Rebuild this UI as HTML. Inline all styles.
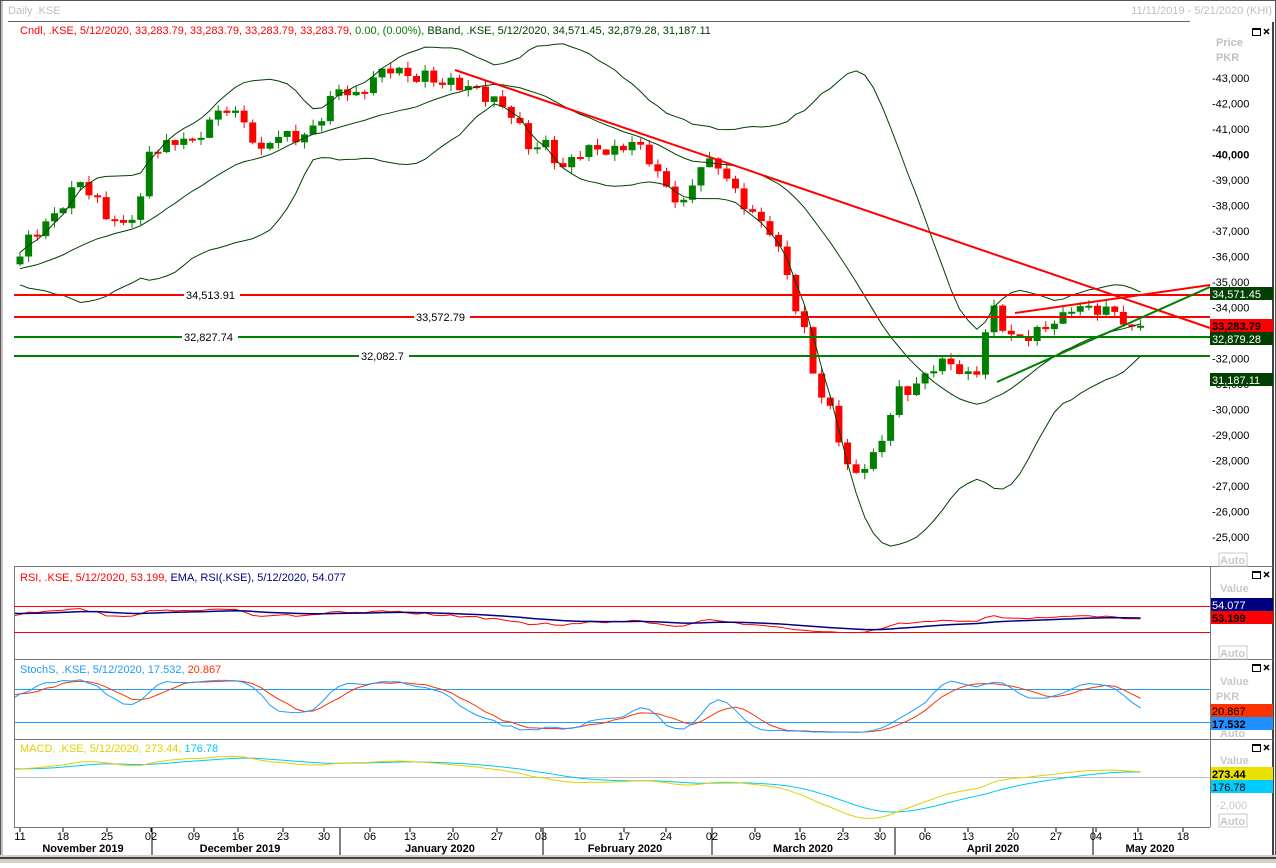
<!DOCTYPE html><html><head><meta charset="utf-8"><style>
body{margin:0;width:1276px;height:863px;overflow:hidden;background:#fff;font-family:"Liberation Sans",Tahoma,sans-serif}
svg text{font-family:"Liberation Sans",Tahoma,sans-serif;font-size:11px}
</style></head><body>
<svg id="s" width="1276" height="863" xmlns="http://www.w3.org/2000/svg">
<rect x="0" y="0" width="1276" height="863" fill="#fff"/>
<rect x="0.5" y="0.5" width="1275" height="862" fill="none" stroke="#555"/>
<line x1="2" y1="1" x2="2" y2="862" stroke="#888"/>
<line x1="8" y1="21.5" x2="1190" y2="21.5" stroke="#666"/>
<line x1="1273" y1="22" x2="1273" y2="855" stroke="#444" stroke-width="2"/>
<rect x="0" y="855" width="1276" height="8" fill="#d4d0c8"/>
<line x1="0" y1="858" x2="1276" y2="858" stroke="#444" stroke-width="2"/>
<text x="8" y="14" fill="#c0c0c0" font-size="12">Daily .KSE</text>
<text x="1272" y="14" fill="#c0c0c0" text-anchor="end">11/11/2019 - 5/21/2020 (KHI)</text>
<text x="20" y="34" fill="#ff0000">Cndl, .KSE, 5/12/2020, 33,283.79, 33,283.79, 33,283.79, 33,283.79, <tspan fill="#008000">0.00, (0.00%),</tspan> <tspan fill="#004000">BBand, .KSE, 5/12/2020, 34,571.45, 32,879.28, 31,187.11</tspan></text>
<line x1="14.5" y1="566" x2="14.5" y2="827" stroke="#777"/>
<line x1="1210.5" y1="566" x2="1210.5" y2="827" stroke="#777"/>
<line x1="14" y1="566.5" x2="1210" y2="566.5" stroke="#777"/>
<line x1="14" y1="659.5" x2="1273" y2="659.5" stroke="#777"/>
<line x1="14" y1="739.5" x2="1273" y2="739.5" stroke="#777"/>
<line x1="14" y1="827.5" x2="1210" y2="827.5" stroke="#777"/>
<line x1="1210" y1="566.5" x2="1273" y2="566.5" stroke="#777"/>
<g id="axis"></g>
<g id="chart"></g>
<line x1="14" y1="295" x2="1210" y2="295" stroke="#ff0000" stroke-width="2"/>
<line x1="14" y1="317" x2="1210" y2="317" stroke="#ff0000" stroke-width="2"/>
<line x1="14" y1="337" x2="1210" y2="337" stroke="#008000" stroke-width="2"/>
<line x1="14" y1="356" x2="1210" y2="356" stroke="#008000" stroke-width="2"/>
<rect x="184" y="289" width="56" height="12" fill="#fff"/><text x="186" y="299" fill="#000">34,513.91</text>
<rect x="414" y="311" width="56" height="12" fill="#fff"/><text x="416" y="321" fill="#000">33,572.79</text>
<rect x="182" y="331" width="56" height="12" fill="#fff"/><text x="184" y="341" fill="#000">32,827.74</text>
<rect x="359" y="350" width="50" height="12" fill="#fff"/><text x="361" y="360" fill="#000">32,082.7</text>
<line x1="455" y1="70" x2="1210" y2="328" stroke="#ff0000" stroke-width="2"/>
<line x1="1015" y1="313" x2="1210" y2="285" stroke="#ff0000" stroke-width="2"/>
<line x1="997" y1="382" x2="1210" y2="287" stroke="#008000" stroke-width="2"/>
<line x1="14" y1="606.5" x2="1210" y2="606.5" stroke="#ff0000"/>
<line x1="14" y1="632.5" x2="1210" y2="632.5" stroke="#ff0000"/>
<line x1="14" y1="689.5" x2="1210" y2="689.5" stroke="#1e9bff"/>
<line x1="14" y1="722.5" x2="1210" y2="722.5" stroke="#1e9bff"/>
<line x1="14" y1="777.5" x2="1210" y2="777.5" stroke="#c0c0c0"/>
<g id="ind"></g>
<text x="20" y="581" fill="#ff0000">RSI, .KSE, 5/12/2020, 53.199, <tspan fill="#000080">EMA, RSI(.KSE), 5/12/2020, 54.077</tspan></text>
<text x="20" y="673" fill="#1e9bff">StochS, .KSE, 5/12/2020, 17.532, <tspan fill="#ff3300">20.867</tspan></text>
<text x="20" y="752" fill="#e0d000">MACD, .KSE, 5/12/2020, 273.44, <tspan fill="#00c8f0">176.78</tspan></text>
<text x="1216" y="46" fill="#c0c0c0" font-weight="bold">Price</text>
<text x="1216" y="61" fill="#c0c0c0" font-weight="bold" font-size="10">PKR</text>
<g id="pax" fill="#000"></g>
<rect x="1210" y="287" width="63" height="13" fill="#004000"/><text x="1212" y="298" fill="#fff">34,571.45</text>
<rect x="1210" y="319" width="63" height="13" fill="#ff0000"/><text x="1212" y="330" fill="#000" font-weight="bold">33,283.79</text>
<rect x="1210" y="332" width="63" height="13" fill="#004000"/><text x="1212" y="343" fill="#fff">32,879.28</text>
<rect x="1210" y="373" width="63" height="13" fill="#004000"/><text x="1212" y="384" fill="#fff">31,187.11</text>
<rect x="1219" y="553" width="28" height="13" fill="#fff" stroke="#c8c8c8"/><text x="1220" y="564" fill="#c8c8c8" font-weight="bold">Auto</text>
<text x="1220" y="592" fill="#c8c8c8" font-weight="bold">Value</text>
<rect x="1211" y="598" width="62" height="13" fill="#000080"/><text x="1212" y="609" fill="#fff">54.077</text>
<rect x="1211" y="611" width="62" height="13" fill="#ff0000"/><text x="1212" y="622" fill="#000" font-weight="bold">53.199</text>
<rect x="1219" y="646" width="28" height="13" fill="#fff" stroke="#c8c8c8"/><text x="1220" y="657" fill="#c8c8c8" font-weight="bold">Auto</text>
<text x="1220" y="685" fill="#c8c8c8" font-weight="bold">Value</text>
<text x="1216" y="700" fill="#c8c8c8" font-weight="bold" font-size="10">PKR</text>
<rect x="1211" y="704" width="62" height="13" fill="#ff3300"/><text x="1212" y="715" fill="#000">20.867</text>
<rect x="1211" y="717" width="62" height="13" fill="#1e90ff"/><text x="1212" y="728" fill="#000" font-weight="bold">17.532</text>
<text x="1220" y="737" fill="#c8c8c8" font-weight="bold">Auto</text>
<text x="1220" y="764" fill="#c8c8c8" font-weight="bold">Value</text>
<rect x="1211" y="767" width="62" height="13" fill="#e8e000"/><text x="1212" y="778" fill="#000" font-weight="bold">273.44</text>
<rect x="1211" y="780" width="62" height="13" fill="#00ccff"/><text x="1212" y="791" fill="#000">176.78</text>
<text x="1216" y="809" fill="#c8c8c8">-2,000</text>
<rect x="1219" y="814" width="28" height="13" fill="#fff" stroke="#c8c8c8"/><text x="1220" y="825" fill="#c8c8c8" font-weight="bold">Auto</text>
<g fill="none" stroke="#000"><rect x="1252.5" y="28.5" width="8" height="7"/><rect x="1252.5" y="571.5" width="8" height="7"/><rect x="1252.5" y="664.5" width="8" height="7"/><rect x="1252.5" y="744.5" width="8" height="7"/></g>
<g stroke="#000" stroke-width="1.5"><path d="M1264 29l5 5M1269 29l-5 5M1264 572l5 5M1269 572l-5 5M1264 665l5 5M1269 665l-5 5M1264 745l5 5M1269 745l-5 5"/></g>
<g fill="#000" stroke="#000" stroke-width="2"><line x1="1253" y1="29" x2="1261" y2="29"/><line x1="1253" y1="572" x2="1261" y2="572"/><line x1="1253" y1="665" x2="1261" y2="665"/><line x1="1253" y1="745" x2="1261" y2="745"/></g>
<g id="dates" fill="#000"></g>
<text x="83" y="852" text-anchor="middle" font-weight="bold">November 2019</text>
<text x="240" y="852" text-anchor="middle" font-weight="bold">December 2019</text>
<text x="440" y="852" text-anchor="middle" font-weight="bold">January 2020</text>
<text x="625" y="852" text-anchor="middle" font-weight="bold">February 2020</text>
<text x="803" y="852" text-anchor="middle" font-weight="bold">March 2020</text>
<text x="993" y="852" text-anchor="middle" font-weight="bold">April 2020</text>
<text x="1150" y="852" text-anchor="middle" font-weight="bold">May 2020</text>
</svg>
<script>
var NS="http://www.w3.org/2000/svg";
function el(p,t,a,txt){var e=document.createElementNS(NS,t);for(var k in a)e.setAttribute(k,a[k]);if(txt!=null)e.textContent=txt;document.getElementById(p).appendChild(e);return e;}
for(var p=25000;p<=43000;p+=1000){var y=78+(43000-p)/1000*25.5;var s=(p/1000)+",000";
 el("pax","text",{x:1212,y:y+4,"font-weight":p==40000?"bold":"normal"},"-"+s);}
var d=[["11",20],["18",63],["25",107],["02",151],["09",194],["16",238],["23",283],["30",324],["06",370],["13",410],["20",453],["27",497],["03",541],["10",580],["17",624],["24",666],["02",712],["09",755],["16",800],["23",843],["30",880],["06",925],["13",968],["20",1013],["27",1056],["04",1096],["11",1138],["18",1183]];
d.forEach(function(a){el("dates","line",{x1:a[1],y1:828,x2:a[1],y2:832,stroke:"#000"});el("dates","text",{x:a[1],y:840,"text-anchor":"middle"},a[0]);});
[152,340,543,712,895,1093].forEach(function(x){el("dates","line",{x1:x,y1:828,x2:x,y2:855,stroke:"#000"});});
var K=[[-30,33500],[-20,35000],[-10,35500],[0,36000],[1,36600],[3,37200],[5,38200],[7,39000],[8,38400],[10,37600],[12,37300],[14,38200],[15,40000],[17,40300],[19,40800],[20,40500],[22,41200],[24,41800],[26,41400],[28,40000],[29,40500],[31,40700],[33,40800],[35,41500],[37,42500],[39,42300],[41,43100],[43,43300],[45,43000],[47,43200],[49,42800],[51,42600],[53,42600],[55,42200],[57,41500],[59,40300],[61,40500],[63,39400],[65,40000],[67,40300],[69,40200],[71,40400],[73,39800],[75,38800],[77,38000],[79,39500],[81,39700],[83,38600],[85,37500],[87,37000],[89,35500],[90,34000],[91,33000],[92,31500],[93,30300],[94,30000],[95,29000],[96,27800],[97,27600],[98,27800],[99,28000],[100,28800],[101,29800],[102,30800],[104,31000],[106,31600],[108,31800],[110,31400],[111,31600],[112,33000],[113,33800],[114,33200],[115,32800],[117,33000],[119,33200],[121,33500],[122,34000],[123,34100],[125,34000],[127,33700],[128,33400],[129,33283],[130,33283]];
var C=[],idx=[];
for(var i=-30;i<=130;i++){var v;for(var j=0;j<K.length-1;j++){if(i>=K[j][0]&&i<=K[j+1][0]){var t=(i-K[j][0])/(K[j+1][0]-K[j][0]);v=K[j][1]+t*(K[j+1][1]-K[j][1]);break;}}
 var n=(i<129)?Math.sin(i*2.3)*220+Math.sin(i*0.9)*120:0;C.push(v+n);idx.push(i);}
function X(i){return 20+i*8.62;}function Y(p){return 78+(43000-p)/1000*25.5;}
var H=[],L=[];
for(var k=0;k<C.length;k++){var o=k>0?C[k-1]:C[k],c=C[k];var h=Math.max(o,c)+Math.abs(Math.sin(k*1.7))*250,l=Math.min(o,c)-Math.abs(Math.cos(k*1.3))*250;H.push(h);L.push(l);
 var i=idx[k];if(i<0)continue;var col=c>=o?"#008000":"#ff0000";var x=X(i);
 el("chart","line",{x1:x,y1:Y(h),x2:x,y2:Y(l),stroke:col});
 var yt=Y(Math.max(o,c)),yb=Y(Math.min(o,c));if(yb-yt<2)yb=yt+2;
 el("chart","rect",{x:x-3.5,y:yt,width:7,height:yb-yt,fill:col});}
var up=[],mid=[],lo=[];
for(var k=19;k<C.length;k++){var s=0;for(var m=k-19;m<=k;m++)s+=C[m];var a=s/20,q=0;for(var m=k-19;m<=k;m++)q+=(C[m]-a)*(C[m]-a);var sd=Math.sqrt(q/20);
 var i=idx[k];if(i<0)continue;var x=X(i);up.push(x+","+Y(a+2*sd));mid.push(x+","+Y(a));lo.push(x+","+Y(a-2*sd));}
[up,mid,lo].forEach(function(pp){el("chart","polyline",{points:pp.join(" "),fill:"none",stroke:"#004000","stroke-width":1});});
var ag=0,al=0,rsi=[];
for(var k=1;k<C.length;k++){var ch=C[k]-C[k-1];var g=Math.max(ch,0),ls=Math.max(-ch,0);if(k<=14){ag+=g/14;al+=ls/14;}else{ag=(ag*13+g)/14;al=(al*13+ls)/14;}rsi.push([idx[k],al==0?50:100-100/(1+ag/al)]);}
var ema=null,rp=[],ep=[];
rsi.forEach(function(r){var v=50+(r[1]-50)*0.5;ema=ema==null?v:ema+(v-ema)*0.12;if(r[0]<-1)return;var x=Math.max(X(r[0]),15);rp.push(x+","+(606+(70-v)*0.65));ep.push(x+","+(606+(70-ema)*0.65));});
el("ind","polyline",{points:rp.join(" "),fill:"none",stroke:"#ff0000"});
el("ind","polyline",{points:ep.join(" "),fill:"none",stroke:"#000080","stroke-width":1.5});
var kk=[],sp=[],dp=[];
for(var k=13;k<C.length;k++){var hh=-1e9,ll=1e9;for(var m=k-13;m<=k;m++){hh=Math.max(hh,H[m]);ll=Math.min(ll,L[m]);}kk.push((C[k]-ll)/(hh-ll)*100);
 if(kk.length>=6){var n=kk.length;var ks=(kk[n-1]+kk[n-2]+kk[n-3])/3;var ds=(kk[n-1]+kk[n-2]+kk[n-3]+kk[n-4]+kk[n-5]+kk[n-6])/6;
 if(idx[k]<-1)continue;var x=Math.max(X(idx[k]),15);sp.push(x+","+(689+(80-ks)*0.55));dp.push(x+","+(689+(80-ds)*0.55));}}
el("ind","polyline",{points:dp.join(" "),fill:"none",stroke:"#ff3300"});
el("ind","polyline",{points:sp.join(" "),fill:"none",stroke:"#1e9bff"});
var e12=C[0],e26=C[0],sig=null,mp=[],gp=[];
for(var k=0;k<C.length;k++){e12+=(C[k]-e12)*2/13;e26+=(C[k]-e26)*2/27;var mv=e12-e26;sig=sig==null?mv:sig+(mv-sig)*0.2;
 if(idx[k]<-1)continue;var x=Math.max(X(idx[k]),15);mp.push(x+","+(775-mv*0.014));gp.push(x+","+(775-sig*0.014));}
el("ind","polyline",{points:gp.join(" "),fill:"none",stroke:"#00c8f0"});
el("ind","polyline",{points:mp.join(" "),fill:"none",stroke:"#e0d000"});
</script>
</body></html>
